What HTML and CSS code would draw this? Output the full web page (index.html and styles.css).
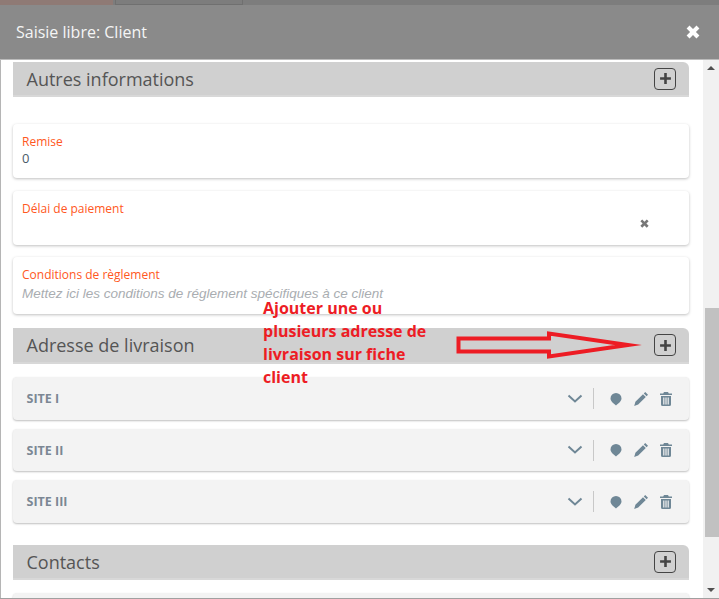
FILE: index.html
```html
<!DOCTYPE html>
<html lang="fr">
<head>
    <meta charset="UTF-8">
    <meta name="viewport" content="width=device-width, initial-scale=1.0">
    <title>Saisie libre: Client</title>
    <link rel="stylesheet" href="styles.css">
</head>
<body>
    <div class="backdrop">
        <span class="tab tab-red"></span>
        <span class="tab tab-grey"></span>
    </div>

    <header class="modal-header">
        <h1>Saisie libre: Client</h1>
        <svg class="close" viewBox="0 0 12 12"><path d="M3 .5 6 3.500 9 .5 11.500 3 8.500 6 11.500 9 9 11.500 6 8.500 3 11.500 .5 9 3.500 6 .5 3z"/></svg>
    </header>

    <div class="modal-body">
        <main class="content">
            <div class="section section-first">
                <h2>Autres informations</h2>
                <button class="add" type="button"><svg viewBox="0 0 12 12"><path d="M4.800 1h2.400v3.800H11v2.400H7.200V11H4.800V7.200H1V4.800h3.800z"/></svg></button>
            </div>

            <div class="field field-remise">
                <label>Remise</label>
                <div class="value">0</div>
            </div>

            <div class="field field-delai">
                <label>Délai de paiement</label>
                <svg class="clear" viewBox="0 0 12 12"><path d="M3 .5 6 3.500 9 .5 11.500 3 8.500 6 11.500 9 9 11.500 6 8.500 3 11.500 .5 9 3.500 6 .5 3z"/></svg>
            </div>

            <div class="field field-conditions">
                <label>Conditions de règlement</label>
                <div class="placeholder">Mettez ici les conditions de réglement spécifiques à ce client</div>
            </div>

            <div class="section section-livraison">
                <h2>Adresse de livraison</h2>
                <button class="add" type="button"><svg viewBox="0 0 12 12"><path d="M4.800 1h2.400v3.800H11v2.400H7.200V11H4.800V7.200H1V4.800h3.800z"/></svg></button>
            </div>

            <div class="site site-1">
                <span class="site-name">SITE I</span>
                <div class="site-actions">
                    <svg class="chevron" viewBox="0 0 16 10"><path d="M1.500 1.500 8 7.500l6.500-6"/></svg>
                    <span class="divider"></span>
                    <svg class="icon" viewBox="0 0 14 14"><path d="M7 1a5.500 5.500 0 0 1 5.500 5.500C12.500 9.500 9 11.500 7 13.500 5 11.500 1.500 9.500 1.500 6.500A5.500 5.500 0 0 1 7 1z"/></svg>
                    <svg class="icon" viewBox="0 0 14 14"><path d="M11.200 0 14 2.800 12.600 4.200 9.800 1.400zM9 2.200 11.800 5 4.200 12.600.2 14l1.200-4.200z"/></svg>
                    <svg class="icon" viewBox="0 0 14 14"><path fill-rule="evenodd" d="M5 0h4l.8 1.500H13V3H1V1.500h3.200zM2 4h10v8.500a1.500 1.500 0 0 1-1.500 1.500h-7A1.500 1.500 0 0 1 2 12.500zM4.200 5.500v7h1.200v-7zM6.400 5.500v7h1.200v-7zM8.600 5.500v7h1.200v-7z"/></svg>
                </div>
            </div>

            <div class="site site-2">
                <span class="site-name">SITE II</span>
                <div class="site-actions">
                    <svg class="chevron" viewBox="0 0 16 10"><path d="M1.500 1.500 8 7.500l6.500-6"/></svg>
                    <span class="divider"></span>
                    <svg class="icon" viewBox="0 0 14 14"><path d="M7 1a5.500 5.500 0 0 1 5.500 5.500C12.500 9.500 9 11.500 7 13.500 5 11.500 1.500 9.500 1.500 6.500A5.500 5.500 0 0 1 7 1z"/></svg>
                    <svg class="icon" viewBox="0 0 14 14"><path d="M11.200 0 14 2.800 12.600 4.200 9.800 1.400zM9 2.200 11.800 5 4.200 12.600.2 14l1.200-4.200z"/></svg>
                    <svg class="icon" viewBox="0 0 14 14"><path fill-rule="evenodd" d="M5 0h4l.8 1.500H13V3H1V1.500h3.200zM2 4h10v8.500a1.500 1.500 0 0 1-1.500 1.500h-7A1.500 1.500 0 0 1 2 12.500zM4.200 5.500v7h1.200v-7zM6.400 5.500v7h1.200v-7zM8.600 5.500v7h1.200v-7z"/></svg>
                </div>
            </div>

            <div class="site site-3">
                <span class="site-name">SITE III</span>
                <div class="site-actions">
                    <svg class="chevron" viewBox="0 0 16 10"><path d="M1.500 1.500 8 7.500l6.500-6"/></svg>
                    <span class="divider"></span>
                    <svg class="icon" viewBox="0 0 14 14"><path d="M7 1a5.500 5.500 0 0 1 5.500 5.500C12.500 9.500 9 11.500 7 13.500 5 11.500 1.500 9.500 1.500 6.500A5.500 5.500 0 0 1 7 1z"/></svg>
                    <svg class="icon" viewBox="0 0 14 14"><path d="M11.200 0 14 2.800 12.600 4.200 9.800 1.400zM9 2.200 11.800 5 4.200 12.600.2 14l1.200-4.200z"/></svg>
                    <svg class="icon" viewBox="0 0 14 14"><path fill-rule="evenodd" d="M5 0h4l.8 1.500H13V3H1V1.500h3.200zM2 4h10v8.500a1.500 1.500 0 0 1-1.500 1.500h-7A1.500 1.500 0 0 1 2 12.500zM4.200 5.500v7h1.200v-7zM6.400 5.500v7h1.200v-7zM8.600 5.500v7h1.200v-7z"/></svg>
                </div>
            </div>

            <div class="section section-contacts">
                <h2>Contacts</h2>
                <button class="add" type="button"><svg viewBox="0 0 12 12"><path d="M4.800 1h2.400v3.800H11v2.400H7.200V11H4.800V7.200H1V4.800h3.800z"/></svg></button>
            </div>

            <div class="site site-next"></div>
        </main>

        <div class="scrollbar">
            <span class="arrow-up"></span>
            <div class="track"><div class="thumb"></div></div>
            <span class="arrow-down"></span>
        </div>
    </div>

    <!-- annotation drawn over the screenshot -->
    <p class="note">Ajouter une ou plusieurs adresse de livraison sur fiche client</p>
    <svg class="note-arrow" viewBox="0 0 190 30"><path d="M2.500 7.500H93V2.500L172 14 93 25.500V20.500H2.500z"/></svg>
</body>
</html>
```

FILE: styles.css
```css
* {
    box-sizing: border-box;
}

html, body {
    height: 100%;
}

body {
    position: relative;
    display: flex;
    flex-direction: column;
    margin: 0;
    height: 599px;
    overflow: hidden;
    font-family: "Open Sans", sans-serif;
    background-color: white;
    border-bottom: 1px solid #a0a0a0;
}

.backdrop {
    display: flex;
    flex: none;
    gap: 2px;
    height: 5px;
    background-color: #7d7d7d;
}

.tab {
    display: block;
    height: 5px;
}

.tab-red {
    width: 113px;
    background-color: #8f7a75;
}

.tab-grey {
    width: 128px;
    border: 1px solid #707070;
    border-top: none;
}

.modal-header {
    display: flex;
    flex: none;
    align-items: center;
    justify-content: space-between;
    height: 55px;
    padding: 0 19px 0 16px;
    background-color: #8a8a8a;
    border-bottom: 1px solid #bbb;
}

.modal-header h1 {
    margin: 0;
    color: #f5f5f5;
    font-size: 16px;
    font-weight: 500;
}

.close {
    width: 14px;
    height: 14px;
    fill: white;
}

.modal-body {
    display: flex;
    flex: 1;
    min-height: 0;
    border-left: 1px solid #b5b5b5;
}

.content {
    flex: 1;
    min-width: 0;
    overflow: hidden;
    padding: 2px 14px 0 12px;
}

.section {
    display: flex;
    align-items: center;
    justify-content: space-between;
    height: 36px;
    padding: 0 13px 0 13.500px;
    background-color: #d0d0d0;
    border-bottom: 2px solid #d8d8d8;
    border-radius: 0 6px 0 0;
}

.section-first {
    height: 35px;
}

.section-livraison {
    margin-top: 14px;
}

.section-contacts {
    height: 35px;
    margin-top: 22px;
}

.section h2 {
    margin: 0;
    color: #555;
    font-size: 18px;
    font-weight: 400;
}

.add {
    display: flex;
    align-items: center;
    justify-content: center;
    width: 22px;
    height: 22px;
    padding: 0;
    background: none;
    border: 1px solid #444;
    border-radius: 4px;
}

.add svg {
    width: 13px;
    height: 13px;
    fill: #444;
}

.field {
    position: relative;
    padding: 9px 9px 0;
    background-color: white;
    border-radius: 4px;
    box-shadow: 0 1px 3px rgba(0, 0, 0, 0.25);
}

.field label {
    display: block;
    color: #ff5722;
    font-size: 12px;
    line-height: 17px;
}

.field-remise {
    height: 54px;
    margin-top: 27px;
}

.field-delai {
    height: 54px;
    margin-top: 13px;
}

.field-conditions {
    height: 57px;
    margin-top: 12px;
}

.value {
    color: #4a5a68;
    font-size: 13px;
    line-height: 16px;
}

.placeholder {
    margin-top: 3px;
    color: #a9adb1;
    font-family: "Liberation Sans", sans-serif;
    font-size: 13.500px;
    font-style: italic;
    line-height: 16px;
}

.clear {
    position: absolute;
    top: 28px;
    right: 40px;
    width: 9px;
    height: 9px;
    fill: #777;
}

.site {
    display: flex;
    align-items: center;
    justify-content: space-between;
    padding: 0 16px 0 13.500px;
    background-color: #f3f3f3;
    border-radius: 4px;
    box-shadow: 0 1px 2px rgba(0, 0, 0, 0.25);
}

.site-1 {
    height: 43px;
    margin-top: 13px;
}

.site-2 {
    height: 42px;
    margin-top: 9px;
}

.site-3 {
    height: 43px;
    margin-top: 9px;
}

.site-next {
    height: 40px;
    margin-top: 13px;
}

.site-name {
    color: #7b8794;
    font-size: 12.500px;
    font-weight: 700;
}

.site-actions {
    display: flex;
    align-items: center;
}

.chevron {
    width: 16px;
    height: 10px;
    fill: none;
    stroke: #6f8796;
    stroke-width: 2;
}

.divider {
    width: 1px;
    height: 21px;
    margin: 0 15px 0 10px;
    background-color: #c8c8c8;
}

.icon {
    width: 14px;
    height: 14px;
    margin-left: 11px;
    fill: #6f8796;
}

.divider + .icon {
    margin-left: 0;
}

.scrollbar {
    display: flex;
    flex: none;
    flex-direction: column;
    align-items: center;
    width: 16px;
    background-color: #f1f1f1;
}

.arrow-up, .arrow-down {
    flex: none;
    width: 0;
    height: 0;
    margin: 6px 0;
    border-left: 4px solid transparent;
    border-right: 4px solid transparent;
}

.arrow-up {
    border-bottom: 4px solid #505050;
}

.arrow-down {
    border-top: 4px solid #505050;
}

.track {
    flex: 1;
    width: 100%;
    padding-top: 232px;
}

.thumb {
    height: 229px;
    margin: 0 0 0 2px;
    background-color: #c1c1c1;
}

.note {
    position: absolute;
    top: 297px;
    left: 263px;
    width: 175px;
    margin: 0;
    color: #ed1c24;
    font-size: 16px;
    font-weight: 700;
    line-height: 23px;
}

.note-arrow {
    position: absolute;
    top: 331px;
    left: 456px;
    width: 190px;
    height: 30px;
    fill: none;
    stroke: #ed1c24;
    stroke-width: 4;
    stroke-miterlimit: 20;
}
```
